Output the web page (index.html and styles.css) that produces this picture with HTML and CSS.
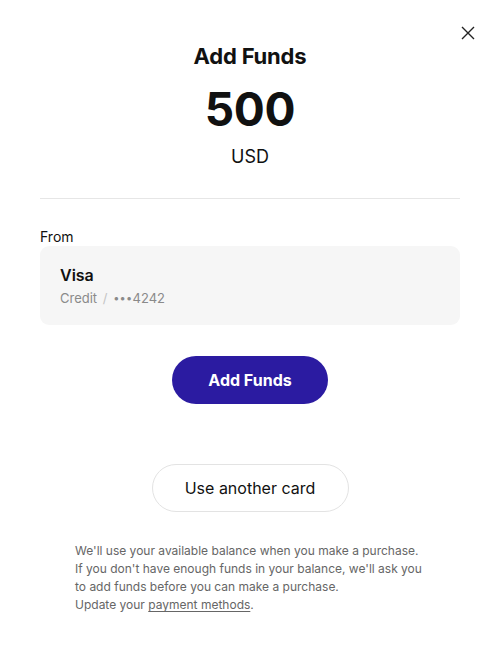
FILE: index.html
```html
<!DOCTYPE html>
<html>
<head>
<meta charset="utf-8">
<link rel="stylesheet" href="styles.css">
</head>
<body>
<div class="modal">
  <button class="close" aria-label="Close">
    <svg width="14" height="14" viewBox="0 0 14 14"><path d="M1 1L13 13M13 1L1 13" stroke="#222" stroke-width="1.4" fill="none"/></svg>
  </button>
  <div class="header">
    <h1 class="title">Add Funds</h1>
    <div class="amount">500</div>
    <div class="currency">USD</div>
  </div>
  <hr class="divider">
  <div class="from-label">From</div>
  <div class="card">
    <div class="card-name">Visa</div>
    <div class="card-meta">Credit <span class="sep">/</span> <span class="dots">•••</span>4242</div>
  </div>
  <div class="actions">
    <button class="btn-primary">Add Funds</button>
    <button class="btn-secondary">Use another card</button>
  </div>
  <p class="note">We'll use your available balance when you make a purchase.<br>If you don't have enough funds in your balance, we'll ask you<br>to add funds before you can make a purchase.<br>Update your <a href="#" class="link">payment methods</a>.</p>
</div>
</body>
</html>
```
FILE: styles.css
```css
* { box-sizing: border-box; }
html, body { margin: 0; padding: 0; background: #fff; }
body { font-family: Inter, "Noto Sans", sans-serif; color: #111; }
.modal { position: relative; width: 500px; height: 654px; padding: 0 40px; }
.close { position: absolute; top: 25px; right: 24px; width: 16px; height: 16px; padding: 0; border: 0; background: none; display: flex; align-items: center; justify-content: center; }
.header { display: flex; flex-direction: column; align-items: center; padding-top: 42px; }
.title { margin: 0; font-size: 22px; font-weight: 700; line-height: 28px; letter-spacing: -0.2px; }
.amount { margin-top: 13px; font-size: 46px; font-weight: 700; line-height: 52px; letter-spacing: -0.3px; }
.currency { margin-top: 11px; font-size: 18px; font-weight: 400; line-height: 22px; }
.divider { margin: 30px 0 0; border: 0; border-top: 1px solid #e6e6e6; }
.from-label { margin-top: 29px; font-size: 14px; line-height: 18px; }
.card { margin-top: 0; background: #f6f6f6; border-radius: 9px; padding: 19px 20px 18px; height: 79px; }
.card-name { font-size: 16px; font-weight: 600; line-height: 20px; }
.card-meta { margin-top: 4px; font-size: 13px; color: #8a8a8a; line-height: 18px; }
.dots { font-size: 11px; letter-spacing: 0.3px; position: relative; top: -1px; }
.sep { color: #c4c4c4; margin: 0 2px; }
.actions { display: flex; flex-direction: column; align-items: center; }
.btn-primary { margin-top: 31px; width: 156px; height: 48px; border: 0; border-radius: 24px; background: #2b1ba1; color: #fff; font-family: Inter, sans-serif; font-size: 16px; font-weight: 700; }
.btn-secondary { margin-top: 60px; width: 197px; height: 48px; border: 1px solid #e3e3e3; border-radius: 24px; background: #fff; color: #111; font-family: Inter, sans-serif; font-size: 16px; font-weight: 400; }
.note { margin: 30px 0 0; padding: 0 20px 0 35px; font-size: 12px; line-height: 18px; color: #666; white-space: nowrap; }
.link { color: #666; text-decoration: underline; text-underline-offset: 2px; }
```
